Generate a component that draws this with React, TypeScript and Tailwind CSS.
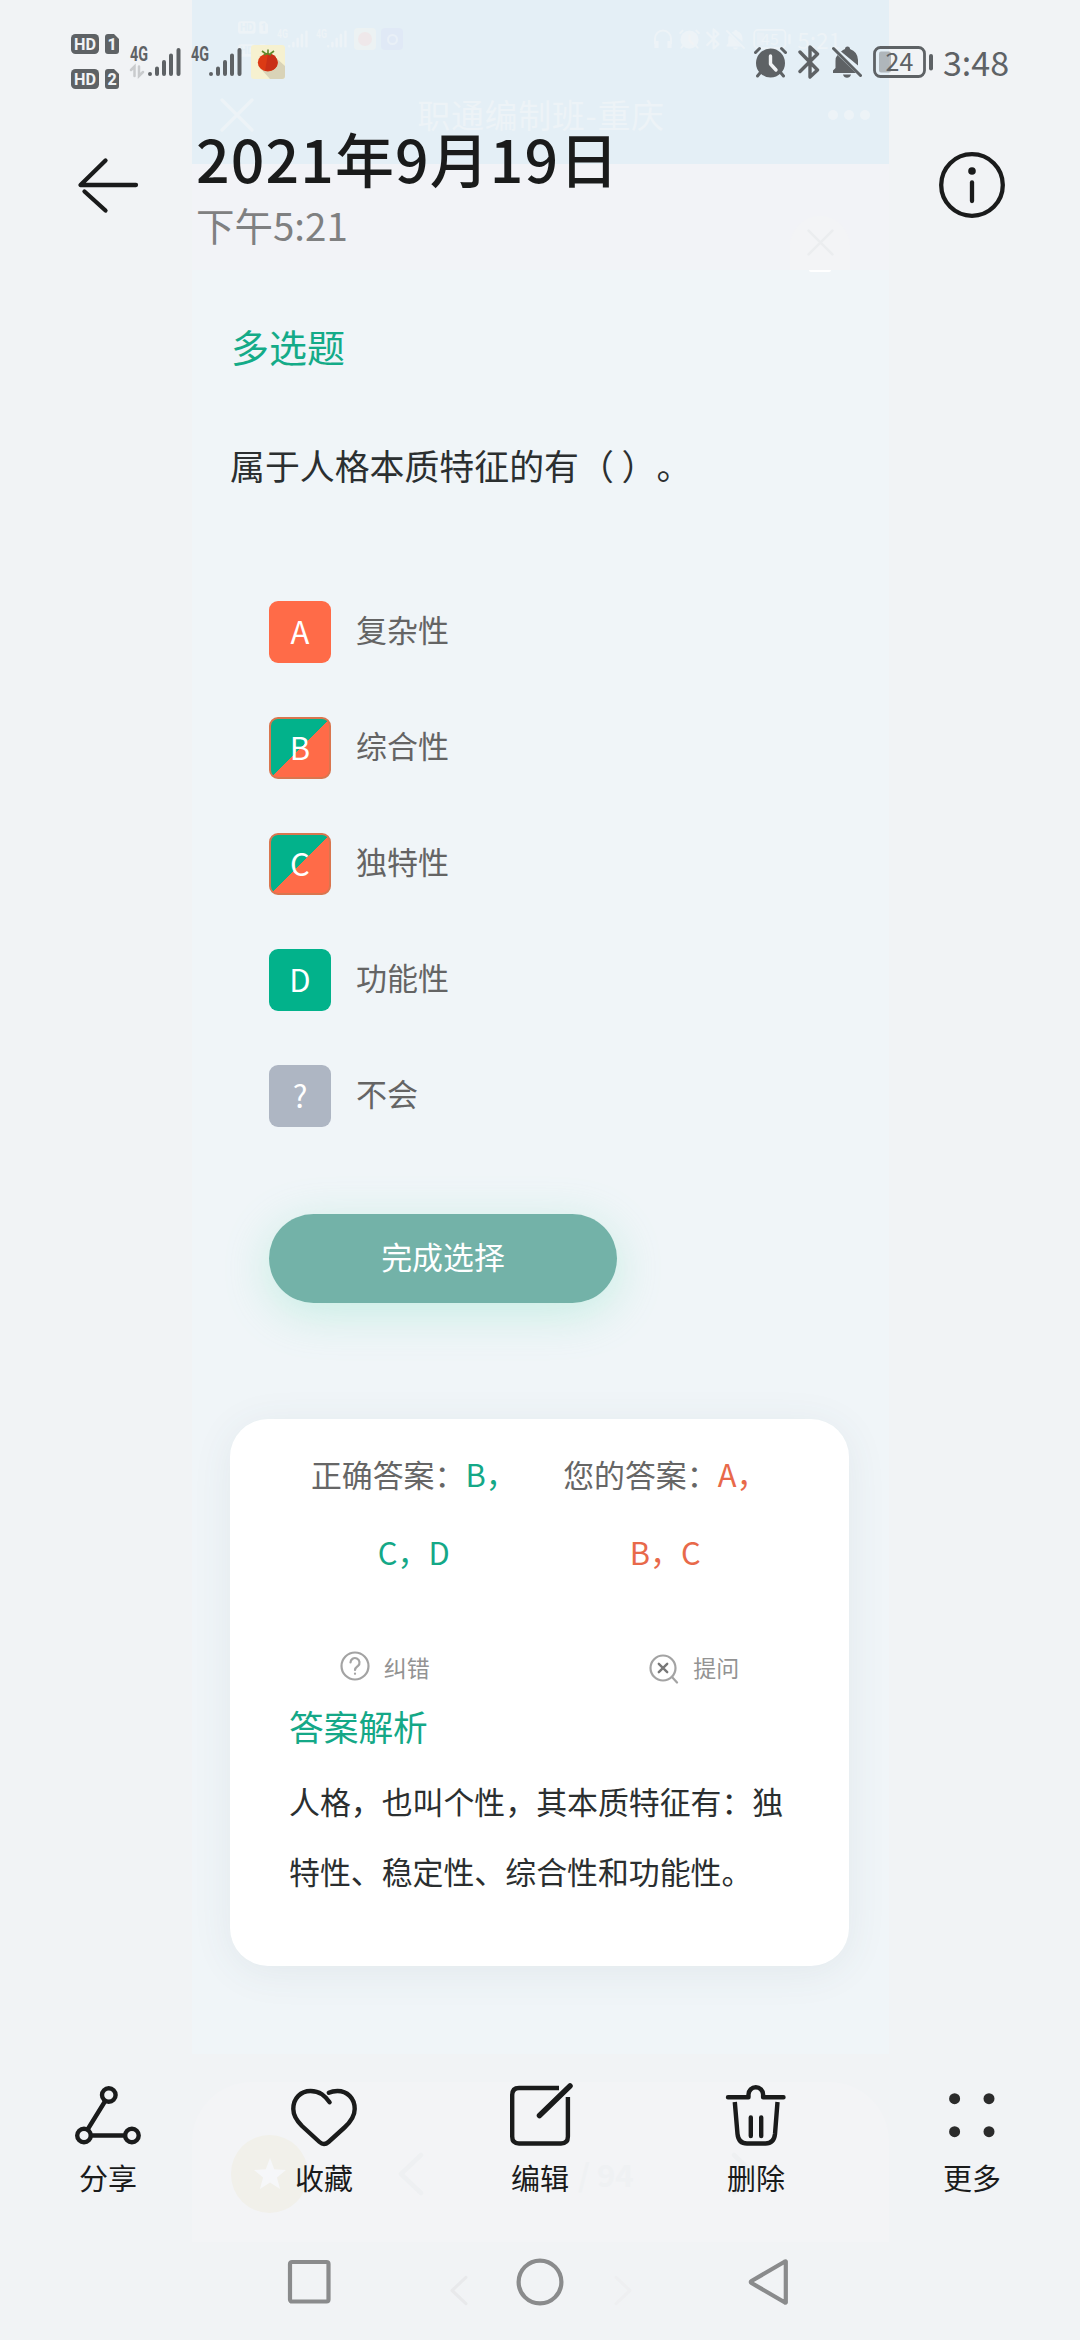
import React from 'react';
import clsx from 'clsx';

interface IconProps {
  className?: string;
}

interface HdBadgeProps {
  sim: string;
  ink?: string;
  className?: string;
}

function HdBadge({ sim, ink = '#f1f3f5', className }: HdBadgeProps) {
  return (
    <svg viewBox="0 0 48 20" className={clsx('overflow-visible', className)}>
      <rect width="28" height="20" rx="4.5" fill="currentColor" />
      <path d="M38 0H43L48 5V17a3 3 0 0 1-3 3H37a3 3 0 0 1-3-3V3a3 3 0 0 1 3-3Z" fill="currentColor" />
      <text x="14" y="16" textAnchor="middle" textLength="22" lengthAdjust="spacingAndGlyphs" fontSize="17" fontWeight="700" fontFamily="Roboto, sans-serif" fill={ink}>HD</text>
      <text x="41" y="16" textAnchor="middle" fontSize="16" fontWeight="800" fontFamily="Roboto, sans-serif" fill={ink}>{sim}</text>
    </svg>
  );
}

function Signal({ data, className }: { data?: boolean; className?: string }) {
  return (
    <svg viewBox="0 0 51 32" className={clsx('overflow-visible', className)} fill="none" stroke="currentColor" strokeWidth="4" strokeLinecap="round">
      <text x="0" y="15" textLength="18" lengthAdjust="spacingAndGlyphs" fontSize="19.500" fontWeight="700" fontFamily="Roboto, sans-serif" fill="currentColor" stroke="none">4G</text>
      <path d="M20 28v.1M27 22.500v5.500M34 16v12M41 9.500v18.500M48.500 4v24" />
      {data && <path d="M1 24L4.500 20.500V30M9 20.500V30L13 26" stroke="#c9cbcd" strokeWidth="2.500" />}
    </svg>
  );
}

function TomatoIcon({ className }: IconProps) {
  return (
    <svg viewBox="0 0 34 34" className={className}>
      <rect width="34" height="34" rx="3" fill="#f6f1d0" />
      <path d="M24 12L34 21V31a3 3 0 0 1-3 3H19L10 24Z" fill="#d9d3b7" />
      <ellipse cx="16.800" cy="17.500" rx="10" ry="9" fill="#dc3a14" />
      <path d="M17 8.500a10 9 0 0 1 5 16.500L14 26Z" fill="#c92f17" />
      <path d="M11 6l4 3M17 4.500V9M23 6l-4 3M13 10l3-1.500 4 1.500" stroke="#5f8a2a" strokeWidth="1.600" fill="none" />
    </svg>
  );
}

function AlarmIcon({ className }: IconProps) {
  return (
    <svg viewBox="0 0 33 32" className={className} stroke="currentColor" strokeLinecap="round" fill="none">
      <circle cx="16.500" cy="17" r="14.500" fill="currentColor" stroke="none" />
      <path d="M1.500 6.500L5.500 2.500M31.500 6.500L27.500 2.500M6 27l-2.500 3M27 27l2.500 3" strokeWidth="3" />
      <path d="M16.500 10v8l5.500 6" stroke="#f1f3f5" strokeWidth="3.400" strokeLinejoin="round" />
    </svg>
  );
}

function BluetoothIcon({ className }: IconProps) {
  return (
    <svg viewBox="0 0 22 34" className={className} stroke="currentColor" strokeWidth="3.400" strokeLinecap="round" strokeLinejoin="round" fill="none">
      <path d="M2 7L19.500 25L12 32V2L19.500 9L2 26.500" />
    </svg>
  );
}

function BellOffIcon({ className }: IconProps) {
  return (
    <svg viewBox="0 0 30 32" className={className}>
      <path d="M5.500 9L24 27H1V24.500L3.500 22V15Q3.500 11 5.500 9ZM9 5.500Q11 3.500 13 3Q13 .5 15.500 .5T18 3Q25.500 5.500 26 14V19.500Z" fill="currentColor" />
      <path d="M11 28.500h8q-1 3.200-4 3.200t-4-3.200Z" fill="currentColor" />
      <path d="M1.500 2.500L28.500 29.500" stroke="currentColor" strokeWidth="3" strokeLinecap="round" />
    </svg>
  );
}

function Battery({ level, className }: { level: string; className?: string }) {
  return (
    <svg viewBox="0 0 60 32" className={clsx('overflow-visible', className)}>
      <rect x="6" y="5.500" width="12" height="21" rx="2" fill="currentColor" opacity=".4" />
      <rect x="1.500" y="1.500" width="50" height="29" rx="6" fill="none" stroke="currentColor" strokeWidth="2.800" />
      <rect x="56" y="8" width="4" height="16.500" rx="2" fill="currentColor" />
      <text x="26.500" y="25" textAnchor="middle" textLength="28" fontSize="25" fontFamily="'Noto Sans CJK SC', sans-serif" fill="currentColor">{level}</text>
    </svg>
  );
}

function HeadphonesIcon({ className }: IconProps) {
  return (
    <svg viewBox="0 0 20 20" className={className} fill="none" stroke="currentColor">
      <path d="M2 15V9.500a8 8 0 0 1 16 0V15" strokeWidth="2" />
      <path d="M3.500 12v7M16.500 12v7" strokeWidth="4" />
    </svg>
  );
}

function CrossIcon({ className }: IconProps) {
  return (
    <svg viewBox="0 0 34 34" className={className} fill="none" stroke="currentColor" strokeWidth="3.200" strokeLinecap="round">
      <path d="M2 2L32 32M32 2L2 32" />
    </svg>
  );
}

function ChevronIcon({ className }: IconProps) {
  return (
    <svg viewBox="0 0 26 44" className={className} fill="none" stroke="currentColor" strokeWidth="4.500" strokeLinecap="round" strokeLinejoin="round">
      <path d="M23 3L3 22L23 41" />
    </svg>
  );
}

const options = [
  { key: 'A', label: '复杂性', style: 'bg-[#ff6b48]' },
  { key: 'B', label: '综合性', style: 'border-2 border-[#d9764f] bg-[linear-gradient(135deg,#02b28b_50%,#ff6b48_50.5%)] bg-origin-border' },
  { key: 'C', label: '独特性', style: 'border-2 border-[#d9764f] bg-[linear-gradient(135deg,#02b28b_50%,#ff6b48_50.5%)] bg-origin-border' },
  { key: 'D', label: '功能性', style: 'bg-[#02b28b]' },
  { key: '?', label: '不会', style: 'bg-[#aeb6c3]' },
];

// The faded app chrome of the photo, seen through the gallery's header
function PhotoHeader() {
  return (
    <>
      <div className="flex h-[164px] flex-col bg-[#e4eff6] text-[#edf3f7]">
        <div className="flex h-[78px] items-center pl-[46px] pr-[48px]">
          <div className="flex flex-col gap-[10px]">
            <HdBadge sim="1" ink="#e4eff6" className="h-[13px] w-[30px]" />
            <HdBadge sim="2" ink="#e4eff6" className="h-[13px] w-[30px]" />
          </div>
          <Signal className="ml-[9px] h-[20px] w-[31px]" />
          <Signal className="ml-[8px] h-[20px] w-[31px]" />
          <div className="ml-[7px] flex h-[22px] w-[22px] items-center justify-center rounded bg-[#ecf2f3]">
            <div className="h-[14px] w-[14px] rounded-full bg-[#efe8ea]" />
          </div>
          <div className="ml-[5px] flex h-[22px] w-[22px] items-center justify-center rounded bg-[#e0e9f6]">
            <div className="h-[11px] w-[11px] rounded-full border-2 border-[#e9f0f7]" />
          </div>
          <div className="ml-auto flex items-center gap-[6px]">
            <HeadphonesIcon className="h-[20px] w-[20px]" />
            <AlarmIcon className="h-[20px] w-[21px]" />
            <BluetoothIcon className="h-[22px] w-[14px]" />
            <BellOffIcon className="h-[21px] w-[19px]" />
            <Battery level="45" className="ml-[2px] h-[20px] w-[38px]" />
            <span className="text-[22.500px] leading-none">5:21</span>
          </div>
        </div>
        <div className="flex h-[74px] items-center justify-between pl-[28px] pr-[19px]">
          <CrossIcon className="h-[34px] w-[34px]" />
          <span className="text-[33px] tracking-[0.600px]">职通编制班-重庆</span>
          <div className="flex gap-[6px]">
            <i className="h-[10px] w-[10px] rounded-full bg-current" />
            <i className="h-[10px] w-[10px] rounded-full bg-current" />
            <i className="h-[10px] w-[10px] rounded-full bg-current" />
          </div>
        </div>
      </div>
      <div className="flex h-[106px] items-end justify-end bg-[#f2f3f7] pr-[39px]">
        <div className="flex h-[54px] w-[60px] flex-col items-center rounded-t-full bg-[#f3f4f6] pt-[13px]">
          <CrossIcon className="h-[27px] w-[27px] text-[#ebedef]" />
          <div className="mt-auto h-[2px] w-[22px] translate-y-[2px] rounded-b-full bg-white" />
        </div>
      </div>
    </>
  );
}

function PhotoFooter() {
  return (
    <>
      <div className="mt-[28px] flex h-[160px] items-center rounded-t-[60px] bg-[#f3f4f6] pl-[39px] pt-[24px]">
        <div className="flex h-[78px] w-[77px] items-center justify-center rounded-full bg-[#f1f0ea]">
          <svg viewBox="0 0 32 32" className="h-[34px] w-[34px]">
            <path d="M16 1l4 10.500 11 .8-8.500 7L25.500 30 16 24l-9.500 6 3-10.700L1 12.300l11-.8Z" fill="#f6f7f9" />
          </svg>
        </div>
        <ChevronIcon className="ml-[90px] h-[44px] w-[26px] text-[#eef0f2]" />
        <span className="ml-[154px] text-[31px] font-bold text-[#eff1f3]">/ 94</span>
        <ChevronIcon className="ml-[97px] h-[44px] w-[26px] rotate-180 text-[#eef0f2]" />
      </div>
      <div className="flex pl-[258px] pt-[33px]">
        <ChevronIcon className="h-[31px] w-[18px] text-[#e8e9eb]" />
        <ChevronIcon className="ml-[146px] h-[31px] w-[18px] rotate-180 text-[#eeeff1]" />
      </div>
    </>
  );
}

function AnswerCard() {
  return (
    <div className="mt-[116px] h-[547px] w-[619px] rounded-[38px] bg-white pt-[16px] shadow-[0_6px_40px_rgba(70,90,100,0.08)]">
      <div className="grid grid-cols-2 px-[58px] text-center text-[30.9px] leading-[78px] text-[#666]">
        <div>
          正确答案：<span className="text-[#14a887]">B，<br />C，D</span>
        </div>
        <div>
          您的答案：<span className="text-[#e8694a]">A，<br />B，C</span>
        </div>
      </div>
      <div className="mt-[61px] grid h-[31px] grid-cols-2 text-[23px] leading-[30px] text-[#939393]">
        <div className="flex items-start justify-center gap-[14px]">
          <svg viewBox="0 0 30 30" className="-mt-px h-[30px] w-[30px]" fill="none" stroke="#a3a3a3" strokeWidth="2.200" strokeLinecap="round">
            <circle cx="15" cy="15" r="13.500" />
            <path d="M10.500 11.500a4.500 4.500 0 1 1 7.500 3.400c-1.800 1.400-3 2-3 4.100M15 22.500v.3" />
          </svg>
          纠错
        </div>
        <div className="flex items-start justify-center gap-[14px]">
          <svg viewBox="0 0 30 30" className="mt-[2px] h-[30px] w-[30px]" fill="none" stroke="#a3a3a3" strokeWidth="2.200" strokeLinecap="round">
            <circle cx="14" cy="14" r="12.500" />
            <path d="M23 23l5 5.500" />
            <path d="M9.800 9.800l8.400 8.400M18.200 9.800l-8.400 8.400" stroke="#777" strokeWidth="2.400" />
          </svg>
          提问
        </div>
      </div>
      <div className="px-[59px]">
        <h2 className="mt-[23px] text-[34.7px] leading-[40px] text-[#14a887]">答案解析</h2>
        <p className="mt-[20px] whitespace-nowrap text-[30.9px] leading-[69.5px] text-[#2b2f30]">
          人格，也叫个性，其本质特征有：独
          <br />
          特性、稳定性、综合性和功能性。
        </p>
      </div>
    </div>
  );
}

function Photo() {
  return (
    <div className="ml-[192px] w-[697px] [grid-area:1/1]">
      <PhotoHeader />
      <div className="h-[1784px] bg-[#f0f5f8] pl-[38px] pt-[56px]">
        <h1 className="pl-px text-[38px] leading-[40px] text-[#14ab88]">多选题</h1>
        <p className="mt-[79px] text-[34.9px] leading-[40px] text-[#2b2f30]">属于人格本质特征的有（ ）。</p>
        <div className="mt-[116px] flex flex-col gap-[54px] pl-[39px]">
          {options.map((option) => (
            <div key={option.key} className="flex h-[62px] items-center text-[31px] leading-[40px]">
              <div className={clsx('flex h-[62px] w-[62px] items-center justify-center rounded-[9px] pb-[2px] text-white', option.style)}>
                {option.key}
              </div>
              <span className="ml-[25px] pb-[6px] text-[#646464]">{option.label}</span>
            </div>
          ))}
        </div>
        <button className="ml-[39px] mt-[87px] block h-[89px] w-[348px] rounded-full bg-[#73b2a8] pb-[4px] text-[30.9px] text-white shadow-[0_10px_46px_rgba(110,225,185,0.32)]">
          完成选择
        </button>
        <AnswerCard />
      </div>
      <PhotoFooter />
    </div>
  );
}

function StatusBar() {
  return (
    <div className="flex h-[123px] items-center pl-[71px] pr-[71px] text-[#5e6265]">
      <div className="flex flex-col gap-[15px]">
        <HdBadge sim="1" className="h-[20px] w-[48px]" />
        <HdBadge sim="2" className="h-[20px] w-[48px]" />
      </div>
      <Signal data className="ml-[11px] h-[32px] w-[51px]" />
      <Signal className="ml-[10px] h-[32px] w-[51px]" />
      <TomatoIcon className="ml-[9px] h-[34px] w-[34px]" />
      <div className="ml-auto flex items-center">
        <AlarmIcon className="h-[32px] w-[33px]" />
        <BluetoothIcon className="ml-[11px] h-[34px] w-[22px]" />
        <BellOffIcon className="ml-[12px] h-[32px] w-[30px]" />
        <Battery level="24" className="ml-[11px] h-[32px] w-[60px]" />
        <span className="ml-[10px] text-[34px] leading-none">3:48</span>
      </div>
    </div>
  );
}

function ActionIcon({ children }: { children: React.ReactNode }) {
  return (
    <svg viewBox="0 0 72 72" className="h-[72px] w-[72px]" fill="none" stroke="#1a1b1b" strokeWidth="4.400" strokeLinecap="round" strokeLinejoin="round">
      {children}
    </svg>
  );
}

const actions = [
  {
    label: '分享',
    icon: (
      <>
        <circle cx="36.800" cy="15" r="6.800" />
        <circle cx="12" cy="55.500" r="6.800" />
        <circle cx="59.900" cy="55.500" r="6.800" />
        <path d="M33.200 21L15.600 49.500M19 55.500H53" />
      </>
    ),
  },
  {
    label: '收藏',
    icon: (
      <path d="M41.600 22.200C37 16 32 11 22.500 11C13 11 5.300 18 5.300 29C5.300 36 9 41 14 46L31.500 62Q36 66 40.500 62L56.500 47.500C62.500 42 66.700 36 66.700 29C66.700 18 59 11 49.500 11Q44.500 11 40.800 12.800" />
    ),
  },
  {
    label: '编辑',
    icon: (
      <>
        <path d="M55 8H15Q8.200 8 8.200 15V56.500Q8.200 63.500 15 63.500H57Q63.900 63.500 63.900 56.500V17" strokeLinecap="butt" />
        <path d="M35.500 35.500L66 6" strokeWidth="5.500" />
      </>
    ),
  },
  {
    label: '删除',
    icon: (
      <>
        <path d="M8 17.200H28.500V14.500a7.300 7.300 0 0 1 14.600 0V17.200H63.500M30.800 37.500V56M41.200 37.500V56" />
        <path d="M14.800 22L17.500 54Q18.500 63.500 27 63.500H45.500Q54 63.500 55 54L57.500 22" strokeLinecap="butt" />
      </>
    ),
  },
  {
    label: '更多',
    icon: (
      <g fill="#2b2b2b" stroke="none">
        <circle cx="18.600" cy="18.700" r="5.500" />
        <circle cx="53" cy="18.700" r="5.500" />
        <circle cx="18.600" cy="51.700" r="5.500" />
        <circle cx="53" cy="51.700" r="5.500" />
      </g>
    ),
  },
];

function Gallery() {
  return (
    <div className="z-10 flex flex-col [grid-area:1/1]">
      <StatusBar />
      <div className="flex items-start pl-[76px] pr-[74px]">
        <svg viewBox="0 0 64 60" className="mt-[32px] h-[60px] w-[64px]" fill="none" stroke="#1a1b1b" strokeWidth="4.300" strokeLinecap="round" strokeLinejoin="round">
          <path d="M29.500 5.500L4.500 30H60" />
          <path d="M8.500 36.500L29.500 55.500" />
        </svg>
        <div className="ml-[56px]">
          <h1 className="text-[59px] font-medium leading-[70px] tracking-[1.100px] text-[#1a1b1b]">2021年9月19日</h1>
          <p className="mt-[6px] text-[38.500px] leading-[50px] text-[#7f8081]">下午5:21</p>
        </div>
        <svg viewBox="0 0 68 68" className="ml-auto mt-[28px] h-[68px] w-[68px]" fill="none" stroke="#1a1b1b" strokeWidth="4.300" strokeLinecap="round">
          <circle cx="34" cy="34" r="30.800" />
          <path d="M34 31.500V50" />
          <circle cx="34" cy="20" r="3.800" fill="#1a1b1b" stroke="none" />
        </svg>
      </div>
      <div className="mt-auto grid grid-cols-5">
        {actions.map((action) => (
          <button key={action.label} className="flex flex-col items-center text-[29px] leading-[40px] text-[#1a1b1b]">
            <ActionIcon>{action.icon}</ActionIcon>
            <span className="mt-[5px]">{action.label}</span>
          </button>
        ))}
      </div>
      <div className="mt-[61px] flex items-center pb-[34px] pl-[286px]">
        <svg viewBox="0 0 48 48" className="h-[48px] w-[48px]" fill="none" stroke="#8a8b8c" strokeWidth="4.200">
          <rect x="4" y="4" width="38.500" height="39.500" rx="2" />
        </svg>
        <svg viewBox="0 0 48 48" className="ml-[182px] h-[48px] w-[48px]" fill="none" stroke="#8a8b8c" strokeWidth="4.200">
          <circle cx="24" cy="24" r="21.400" />
        </svg>
        <svg viewBox="0 0 48 48" className="ml-[183px] h-[48px] w-[48px]" fill="none" stroke="#8a8b8c" strokeWidth="4.200" strokeLinejoin="round">
          <path d="M38.800 3.500V44.500Q38.500 45 38 44.500L4.500 25Q3 24 4.500 23L38 3.500Q38.500 3 38.800 3.500Z" />
        </svg>
      </div>
    </div>
  );
}

export default function App() {
  return (
    <div className="grid h-[2340px] w-[1080px] overflow-hidden bg-[#f1f3f5] font-['Noto_Sans_CJK_SC',sans-serif] [text-spacing-trim:space-all]">
      <Photo />
      <Gallery />
    </div>
  );
}
